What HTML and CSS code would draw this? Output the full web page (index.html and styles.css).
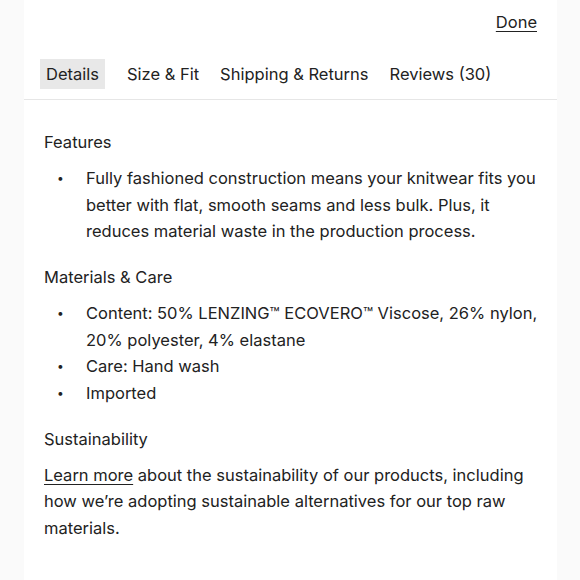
FILE: index.html
```html
<!DOCTYPE html>
<html>
<head>
<meta charset="utf-8">
<link rel="stylesheet" href="styles.css">
</head>
<body>
<div class="panel">
  <div class="top">
    <a class="done" href="#">Done</a>
  </div>
  <nav class="tabs">
    <span class="tab active">Details</span>
    <span class="tab">Size &amp; Fit</span>
    <span class="tab">Shipping &amp; Returns</span>
    <span class="tab">Reviews (30)</span>
  </nav>
  <div class="content">
    <h3 class="heading">Features</h3>
    <ul class="list">
      <li><span class="txt">Fully fashioned construction means your knitwear fits you better with flat, smooth seams and less bulk. Plus, it reduces material waste in the production process.</span></li>
    </ul>
    <h3 class="heading">Materials &amp; Care</h3>
    <ul class="list">
      <li><span class="txt">Content: 50% LENZING™ ECOVERO™ Viscose, 26% nylon, 20% polyester, 4% elastane</span></li>
      <li><span class="txt">Care: Hand wash</span></li>
      <li><span class="txt">Imported</span></li>
    </ul>
    <h3 class="heading">Sustainability</h3>
    <p class="para"><a href="#">Learn more</a> about the sustainability of our products, including how we’re adopting sustainable alternatives for our top raw materials.</p>
  </div>
</div>
</body>
</html>
```

FILE: styles.css
```css
html, body {
  margin: 0;
  padding: 0;
  background: #fafafa;
  height: 100%;
}
body {
  font-family: Inter, "Noto Sans", sans-serif;
  color: #222;
  font-size: 16.5px;
}
.panel {
  margin: 0 23px 0 24px;
  background: #fff;
  min-height: 100%;
}
.top {
  display: flex;
  justify-content: flex-end;
  padding: 12px 20px 0 0;
  height: 30px;
}
.done {
  color: #222;
  text-decoration: underline;
  text-underline-offset: 3px;
}
.tabs {
  display: flex;
  padding: 17px 16px 10px;
  border-bottom: 1px solid #e6e6e6;
}
.tab {
  padding: 5px 6px;
  margin-right: 9px;
}
.tab.active {
  background: #e8e8e8;
  margin-right: 16px;
}
.content {
  padding: 29px 16px 0 20px;
  line-height: 26.5px;
}
.heading {
  font-weight: 400;
  font-size: 16.5px;
  margin: 0 0 9.5px;
}
.list {
  list-style: none;
  margin: 0 0 19.5px;
  padding: 0;
}
.list li {
  display: flex;
}
.list li::before {
  content: "•";
  flex: none;
  width: 29px;
  padding-left: 13px;
  font-size: 12px;
}
.txt {
  flex: 1;
  min-width: 0;
}
.para {
  margin: 0;
}
.para a {
  color: #222;
  text-decoration: underline;
  text-underline-offset: 3px;
}
```
